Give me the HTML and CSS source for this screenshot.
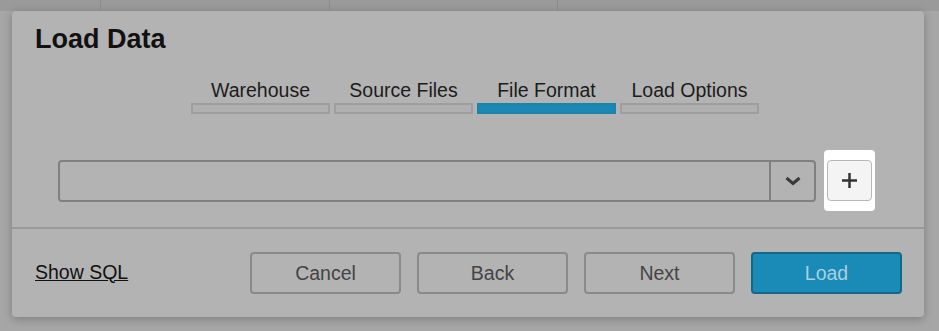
FILE: index.html
```html
<!DOCTYPE html>
<html>
<head>
  <title>Load Data</title>
  <link rel="stylesheet" href="styles.css">
</head>
<body>

  <div class="backdrop-head">
    <div class="cell c1"></div>
    <div class="cell c2"></div>
    <div class="cell c3"></div>
    <div class="cell c4"></div>
  </div>

  <div class="dialog">
    <h2>Load Data</h2>

    <div class="steps">
      <div class="step">
        <span>Warehouse</span>
        <div class="bar"></div>
      </div>
      <div class="step">
        <span>Source Files</span>
        <div class="bar"></div>
      </div>
      <div class="step active">
        <span>File Format</span>
        <div class="bar"></div>
      </div>
      <div class="step">
        <span>Load Options</span>
        <div class="bar"></div>
      </div>
    </div>

    <div class="format-row">
      <div class="select">
        <div class="select-value"></div>
        <div class="select-arrow">
          <svg width="16" height="10" viewBox="0 0 16 10">
            <path d="M1.5 2 L8 7.5 L14.5 2" fill="none" stroke="#3a3a3a" stroke-width="3"/>
          </svg>
        </div>
      </div>
      <div class="spotlight">
        <button class="add-btn">
          <svg width="17" height="17" viewBox="0 0 17 17">
            <path d="M8.5 1 V16 M1 8.5 H16" stroke="#333" stroke-width="2.5"/>
          </svg>
        </button>
      </div>
    </div>

    <div class="footer">
      <a class="show-sql">Show SQL</a>
      <div class="actions">
        <button class="btn">Cancel</button>
        <button class="btn">Back</button>
        <button class="btn">Next</button>
        <button class="btn primary">Load</button>
      </div>
    </div>
  </div>

</body>
</html>
```

FILE: styles.css
```css
body {
  margin: 0;
  background: #a6a6a6;
  font-family: "Liberation Sans", Arial, sans-serif;
  height: 331px;
  overflow: hidden;
}

.backdrop-head {
  display: flex;
  height: 11px;
  background: #9a9a9a;
}

.cell {
  border-right: 1px solid #8a8a8a;
}

.c1 { width: 100px; }
.c2 { width: 228px; }
.c3 { width: 227px; }
.c4 { flex: 1; border-right: none; }

.dialog {
  margin-left: 12px;
  width: 912px;
  height: 306px;
  background: #b3b3b3;
  border-radius: 4px;
  box-shadow: 0 2px 8px rgba(0, 0, 0, 0.25);
  display: flex;
  flex-direction: column;
}

h2 {
  margin: 0;
  padding: 13px 0 0 23px;
  font-size: 27px;
  line-height: 30px;
  color: #111;
}

.steps {
  display: flex;
  gap: 4px;
  margin: 24px 0 0 179px;
}

.step {
  width: 139px;
  display: flex;
  flex-direction: column;
  align-items: center;
  font-size: 19.5px;
  color: #1c1c1c;
}

.step span {
  line-height: 24px;
}

.bar {
  width: 100%;
  height: 11px;
  box-sizing: border-box;
  margin-top: 1px;
  border: 2px solid #9e9e9e;
  background: #b0b0b0;
}

.step.active .bar {
  border-color: #1b84ad;
  background: #1b88b4;
}

.format-row {
  display: flex;
  align-items: center;
  gap: 8px;
  margin: 36px 0 0 46px;
}

.select {
  width: 758px;
  height: 42px;
  box-sizing: border-box;
  border: 2px solid #808080;
  border-radius: 4px;
  display: flex;
}

.select-value {
  flex: 1;
}

.select-arrow {
  width: 43px;
  border-left: 2px solid #808080;
  display: flex;
  align-items: center;
  justify-content: center;
}

.spotlight {
  width: 51px;
  height: 61px;
  background: #fff;
  border-radius: 4px;
  display: flex;
  align-items: center;
  justify-content: center;
}

.add-btn {
  width: 45px;
  height: 41px;
  padding: 0;
  border: 1px solid #b8b8b8;
  border-radius: 4px;
  background: #f4f4f4;
  display: flex;
  align-items: center;
  justify-content: center;
}

.footer {
  margin-top: 16px;
  border-top: 2px solid #9a9a9a;
  flex: 1;
  display: flex;
  align-items: center;
  justify-content: space-between;
  padding: 0 22px 0 23px;
}

.show-sql {
  font-size: 19.5px;
  color: #111;
  text-decoration: underline;
  margin-top: -2px;
}

.actions {
  display: flex;
  gap: 16px;
}

.btn {
  width: 151px;
  height: 42px;
  border: 2px solid #8a8a8a;
  border-radius: 4px;
  background: #b3b3b3;
  color: #444;
  font-family: "Liberation Sans", Arial, sans-serif;
  font-size: 19.5px;
}

.btn.primary {
  background: #1a8ab6;
  border-color: #13688a;
  color: #a8d0e0;
}
```
